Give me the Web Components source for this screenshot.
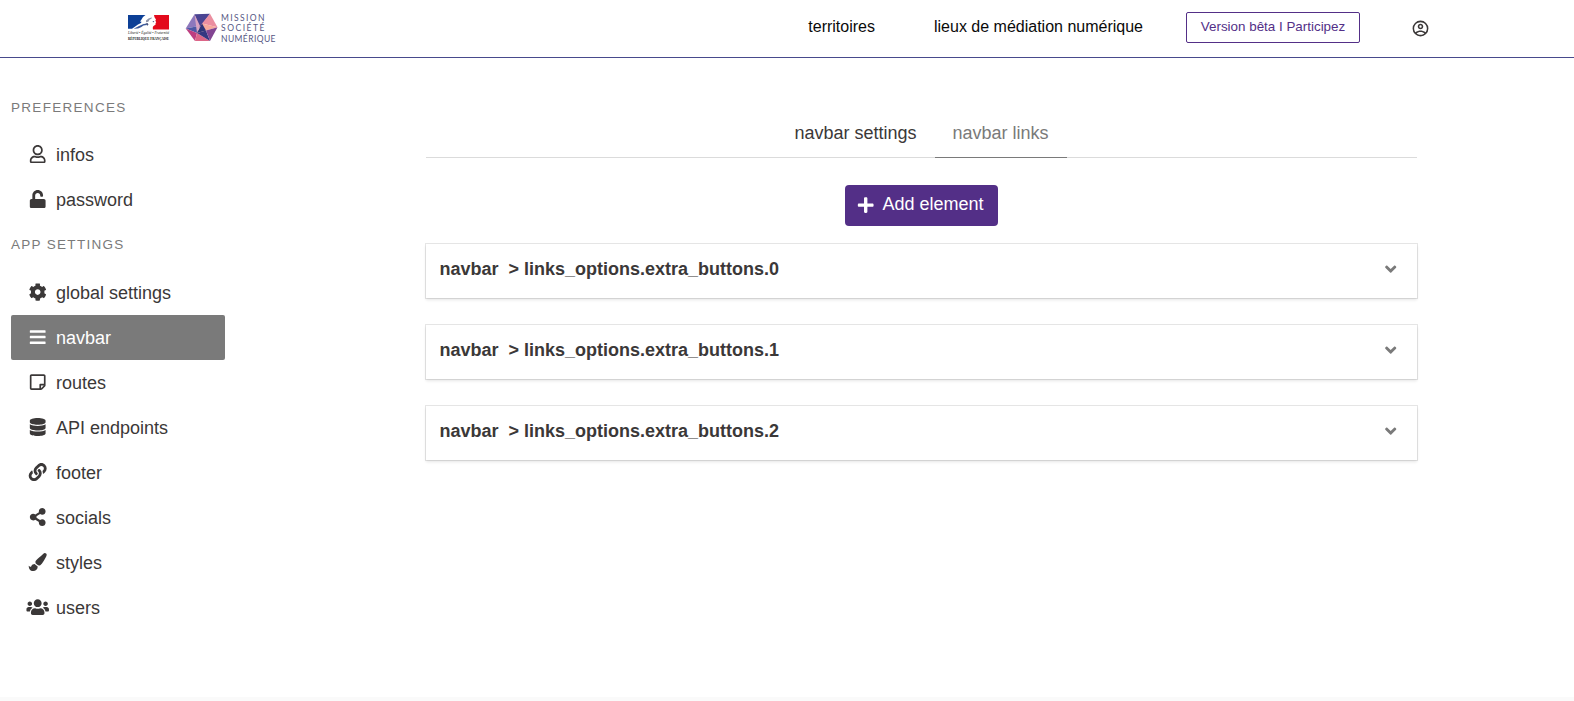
<!DOCTYPE html>
<html lang="fr">
<head>
<meta charset="utf-8">
<title>navbar links</title>
<style>
html,body{margin:0;height:100%}
body{background:#fff;color:#3b3838;font:18px/27px "Liberation Sans",Arial,sans-serif;overflow:hidden}
</style>
</head>
<body>
<app-shell></app-shell>
<script>
const P={
user:[448,"M313.6 304c-28.7 0-42.5 16-89.6 16-47.1 0-60.8-16-89.6-16C60.2 304 0 364.2 0 438.4V464c0 26.5 21.5 48 48 48h352c26.5 0 48-21.5 48-48v-25.6c0-74.2-60.2-134.4-134.4-134.4zM400 464H48v-25.6c0-47.6 38.8-86.4 86.4-86.4 14.6 0 38.3 16 89.6 16 51.7 0 74.9-16 89.6-16 47.6 0 86.4 38.8 86.4 86.4V464zM224 288c79.5 0 144-64.5 144-144S303.5 0 224 0 80 64.5 80 144s64.5 144 144 144zm0-240c52.9 0 96 43.1 96 96s-43.1 96-96 96-96-43.1-96-96 43.1-96 96-96z"],
unlock:[448,"M400 256H152V152.9c0-39.6 31.7-72.5 71.3-72.9 40-.4 72.7 32.1 72.7 72v16c0 13.3 10.7 24 24 24h32c13.3 0 24-10.7 24-24v-16C376 68 307.5-.3 223.5 0 139.5.3 72 69.5 72 153.5V256H48c-26.5 0-48 21.5-48 48v160c0 26.5 21.5 48 48 48h352c26.5 0 48-21.5 48-48V304c0-26.5-21.5-48-48-48z"],
cog:[512,"M487.4 315.7l-42.6-24.6c4.3-23.2 4.3-47 0-70.2l42.6-24.6c4.9-2.8 7.1-8.6 5.5-14-11.1-35.6-30-67.8-54.7-94.6-3.8-4.1-10-5.1-14.8-2.3L380.8 110c-17.9-15.4-38.5-27.3-60.8-35.1V25.8c0-5.6-3.9-10.5-9.4-11.7-36.7-8.2-74.3-7.8-109.2 0-5.5 1.2-9.4 6.1-9.4 11.7V75c-22.2 7.9-42.8 19.8-60.8 35.1L88.7 85.5c-4.9-2.8-11-1.9-14.8 2.3-24.7 26.7-43.6 58.9-54.7 94.6-1.7 5.4.6 11.2 5.5 14L67.3 221c-4.3 23.2-4.3 47 0 70.2l-42.6 24.6c-4.9 2.8-7.1 8.6-5.5 14 11.1 35.6 30 67.8 54.7 94.6 3.8 4.1 10 5.1 14.8 2.3l42.6-24.6c17.9 15.4 38.5 27.3 60.8 35.1v49.2c0 5.6 3.9 10.5 9.4 11.7 36.7 8.2 74.3 7.8 109.2 0 5.5-1.2 9.4-6.1 9.4-11.7v-49.2c22.2-7.9 42.8-19.8 60.8-35.1l42.6 24.6c4.9 2.8 11 1.9 14.8-2.3 24.7-26.7 43.6-58.9 54.7-94.6 1.5-5.5-.7-11.3-5.6-14.1zM256 336c-44.1 0-80-35.9-80-80s35.9-80 80-80 80 35.9 80 80-35.9 80-80 80z"],
bars:[448,"M16 60h416a16 16 0 0 1 16 16v40a16 16 0 0 1-16 16H16a16 16 0 0 1-16-16V76a16 16 0 0 1 16-16zm0 160h416a16 16 0 0 1 16 16v40a16 16 0 0 1-16 16H16a16 16 0 0 1-16-16v-40a16 16 0 0 1 16-16zm0 160h416a16 16 0 0 1 16 16v40a16 16 0 0 1-16 16H16a16 16 0 0 1-16-16v-40a16 16 0 0 1 16-16z"],
note:[448,"M448 348.106V80c0-26.51-21.49-48-48-48H48C21.49 32 0 53.49 0 80v351.988c0 26.51 21.49 48 48 48h268.118a48 48 0 0 0 33.941-14.059l83.882-83.882A48 48 0 0 0 448 348.106zm-128 80.014v-76.118h76.118L320 428.12zM400 80v223.988H296c-13.255 0-24 10.745-24 24v104H48V80h352z"],
database:[448,"M448 73.143v45.714C448 159.143 347.667 192 224 192S0 159.143 0 118.857V73.143C0 32.857 100.333 0 224 0s224 32.857 224 73.143zM448 176v102.857C448 319.143 347.667 352 224 352S0 319.143 0 278.857V176c48.125 33.143 136.208 48.572 224 48.572S399.874 209.143 448 176zm0 160v102.857C448 479.143 347.667 512 224 512S0 479.143 0 438.857V336c48.125 33.143 136.208 48.572 224 48.572S399.874 369.143 448 336z"],
link:[512,"M326.612 185.391c59.747 59.809 58.927 155.698.36 214.59-.11.12-.24.25-.36.37l-67.2 67.2c-59.27 59.27-155.699 59.262-214.96 0-59.27-59.26-59.27-155.7 0-214.96l37.106-37.106c9.84-9.84 26.786-3.3 27.294 10.606.648 17.722 3.826 35.527 9.69 52.721 1.986 5.822.567 12.262-3.783 16.612l-13.087 13.087c-28.026 28.026-28.905 73.66-1.155 101.96 28.024 28.579 74.086 28.749 102.325.51l67.2-67.19c28.191-28.191 28.073-73.757 0-101.83-3.701-3.694-7.429-6.564-10.341-8.569a16.037 16.037 0 0 1-6.947-12.606c-.396-10.567 3.348-21.456 11.698-29.806l21.054-21.055c5.521-5.521 14.182-6.199 20.584-1.731a152.482 152.482 0 0 1 20.522 17.197zM467.547 44.449c-59.261-59.262-155.69-59.27-214.96 0l-67.2 67.2c-.12.12-.25.25-.36.37-58.566 58.892-59.387 154.781.36 214.59a152.454 152.454 0 0 0 20.521 17.196c6.402 4.468 15.064 3.789 20.584-1.731l21.054-21.055c8.35-8.35 12.094-19.239 11.698-29.806a16.037 16.037 0 0 0-6.947-12.606c-2.912-2.005-6.64-4.875-10.341-8.569-28.073-28.073-28.191-73.639 0-101.83l67.2-67.19c28.239-28.239 74.3-28.069 102.325.51 27.75 28.3 26.872 73.934-1.155 101.96l-13.087 13.087c-4.35 4.35-5.769 10.79-3.783 16.612 5.864 17.194 9.042 34.999 9.69 52.721.509 13.906 17.454 20.446 27.294 10.606l37.106-37.106c59.271-59.259 59.271-155.699.001-214.959z"],
share:[448,"M352 320c-22.608 0-43.387 7.819-59.79 20.895l-102.486-64.054a96.551 96.551 0 0 0 0-41.683l102.486-64.054C308.613 184.181 329.392 192 352 192c53.019 0 96-42.981 96-96S405.019 0 352 0s-96 42.981-96 96c0 7.158.79 14.13 2.276 20.841L155.79 180.895C139.387 167.819 118.608 160 96 160c-53.019 0-96 42.981-96 96s42.981 96 96 96c22.608 0 43.387-7.819 59.79-20.895l102.486 64.054A96.301 96.301 0 0 0 256 416c0 53.019 42.981 96 96 96s96-42.981 96-96-42.981-96-96-96z"],
brush:[512,"M167.02 309.34c-40.12 2.58-76.53 17.86-97.19 72.3-2.35 6.21-8 9.98-14.59 9.98-11.11 0-45.46-27.67-55.25-34.35C0 439.62 37.93 512 128 512c75.86 0 128-43.77 128-120.19 0-3.11-.65-6.08-.97-9.13l-88.01-73.34zM457.89 0c-15.16 0-29.37 6.71-40.21 16.45C213.27 199.05 192 203.34 192 257.09c0 13.7 3.25 26.76 8.73 38.7l63.82 53.18c7.21 1.8 14.64 3.03 22.39 3.03 62.11 0 98.11-45.47 211.16-256.46 7.38-14.35 13.9-29.85 13.9-45.99C512 20.64 486 0 457.89 0z"],
users:[640,"M96 224c35.3 0 64-28.7 64-64s-28.7-64-64-64-64 28.7-64 64 28.7 64 64 64zm448 0c35.3 0 64-28.7 64-64s-28.7-64-64-64-64 28.7-64 64 28.7 64 64 64zm32 32h-64c-17.6 0-33.5 7.1-45.1 18.6 40.3 22.1 68.9 62 75.1 109.4h66c17.7 0 32-14.3 32-32v-32c0-35.3-28.7-64-64-64zm-256 0c61.9 0 112-50.1 112-112S381.9 32 320 32 208 82.1 208 144s50.1 112 112 112zm76.8 32h-8.3c-20.8 10-43.9 16-68.5 16s-47.6-6-68.5-16h-8.3C179.6 288 128 339.6 128 403.2V432c0 26.5 21.5 48 48 48h288c26.5 0 48-21.5 48-48v-28.8c0-63.6-51.6-115.2-115.2-115.2zm-223.7-13.4C161.5 263.1 145.6 256 128 256H64c-35.3 0-64 28.7-64 64v32c0 17.7 14.3 32 32 32h65.9c6.3-47.4 34.9-87.3 75.2-109.4z"],
plus:[448,"M416 208H272V64c0-17.67-14.33-32-32-32h-32c-17.67 0-32 14.33-32 32v144H32c-17.67 0-32 14.33-32 32v32c0 17.67 14.33 32 32 32h144v144c0 17.67 14.33 32 32 32h32c17.67 0 32-14.33 32-32V304h144c17.67 0 32-14.33 32-32v-32c0-17.67-14.33-32-32-32z"],
angle:[320,"M143 352.3L7 216.3c-9.4-9.4-9.4-24.6 0-33.9l22.6-22.6c9.4-9.4 24.6-9.4 33.9 0l96.4 96.4 96.4-96.4c9.4-9.4 24.6-9.4 33.9 0l22.6 22.6c9.4 9.4 9.4 24.6 0 33.9l-136 136c-9.2 9.4-24.4 9.4-33.8 0z"]
};
function define(name,render){
  customElements.define(name,class extends HTMLElement{
    connectedCallback(){
      if(this.shadowRoot)return;
      this.attachShadow({mode:"open"}).innerHTML=render(this);
    }
  });
}
define("app-icon",el=>{
  const [w,d]=P[el.getAttribute("name")];
  return `<style>:host{display:block;flex:none;width:27px;height:27px}svg{display:block;width:27px;height:27px;fill:currentColor}</style><svg viewBox="0 0 27 27"><path transform="translate(${13.7-w*9/512} 4.1) scale(${18/512})" d="${d}"/></svg>`;
});
define("republique-logo",()=>`<style>:host{display:block;width:42px;height:28px}svg{display:block;overflow:visible}</style>
<svg width="42" height="28" viewBox="0 0 42 28">
<path fill="#0c3f96" d="M0 0h17.500l-2.500 2-1.800 3-1.200 1.500 1.500.2-.5 1.300-3 1.500L4 13.800H0z"/>
<path fill="#e30a1c" d="M26 0h15v14.500H25c-.6-2 0-3.500 1.600-4.200l1.100-.9-.2-1.300.7-.6-.8-1.900.6-1.100-1.500-2.200z"/>
<path fill="#3c5a9c" d="M5.500 13.800 11 11l4.500-2 2.500-.3 1 1.200-3.500.6-2.500 1.800-3 1.200z"/>
<path fill="#8d93a8" d="m18 5.500 2.500-2 3-1 .6.600-2.600 1.600-1.200 2-2.300.6z"/>
<path fill="#44517c" d="m17.500 8.500 2-.5 1 1.500-1.200 1.200zM24.500 6.500l1.500-.4.200.8-1.200.3z"/>
<text x="0" y="19" textLength="41" lengthAdjust="spacingAndGlyphs" font-family="Liberation Serif,serif" font-style="italic" font-size="4.200" fill="#222">Liberté • Égalité • Fraternité</text>
<text x="0" y="24.500" textLength="41" lengthAdjust="spacingAndGlyphs" font-family="Liberation Serif,serif" font-weight="bold" font-size="4.800" fill="#111">RÉPUBLIQUE FRANÇAISE</text>
</svg>`);
define("mission-logo",()=>`<style>:host{display:block;width:92px;height:34px}svg{display:block;overflow:visible}</style>
<svg width="92" height="34" viewBox="0 0 92 34">
<path fill="#8d78bd" d="M-.3 15.500 8.500 1.300 13 13z"/>
<path fill="#4d58a5" d="M-.3 15.500 13 13 11 20z"/>
<path fill="#4a4492" d="M8.500 1.300 24 .7 13.500 15z"/>
<path fill="#d9a3c2" d="M8.500 1.300 14 13 11 20z"/>
<path fill="#eb8fa0" d="M24 .7 31.500 14.300 16 10.500z"/>
<path fill="#f6a99c" d="M16 10.500 31.500 14.300 11 20z"/>
<path fill="#2d3478" d="M16 10.500 20 17.500 11 20z"/>
<path fill="#bd3f80" d="M-.3 15.500 11 20 9 28z"/>
<path fill="#dc6688" d="M11 20 9 28 24 28z"/>
<path fill="#343781" d="M11 20 20 17.500 24 28z"/>
<path fill="#824592" d="M20 17.500 31.500 14.300 24 28z"/>
<g font-family="Lato,sans-serif" font-size="8.500" fill="#555784"><text x="35" y="7.500" textLength="43.500">MISSION</text><text x="35" y="18" textLength="43.500">SOCIÉTÉ</text><text x="35" y="28.500" textLength="54.500">NUMÉRIQUE</text></g>
</svg>`);
define("top-bar",()=>`<style>
:host{display:flex;height:57px;border-bottom:1px solid #484a8c;box-sizing:content-box;color:#0a0a0a;font-size:16px;line-height:24px;align-items:flex-start}
republique-logo{margin:15px 0 0 128px}mission-logo{margin:13px 0 0 16px}
nav{display:flex;margin-left:auto;align-items:flex-start}
a{white-space:nowrap;margin-top:15px}
.l{margin-left:59px}
.b{box-sizing:border-box;height:31px;width:174px;margin:12px 0 0 43px;border:1px solid #532f87;border-radius:2px;text-align:center;color:#532f87;font-size:13.400px;line-height:28px}
svg{margin:19px 144px 0 51px;width:19px;height:19px;fill:#3b3838}
</style><republique-logo></republique-logo><mission-logo></mission-logo>
<nav><a>territoires</a><a class="l">lieux de médiation numérique</a><a class="b">Version bêta I Participez</a>
<svg viewBox="0 0 24 24"><path d="M12,2A10,10 0 0,0 2,12A10,10 0 0,0 12,22A10,10 0 0,0 22,12A10,10 0 0,0 12,2M7.07,18.28C7.5,17.38 10.12,16.5 12,16.5C13.88,16.5 16.5,17.38 16.93,18.28C15.57,19.36 13.86,20 12,20C10.14,20 8.43,19.36 7.07,18.28M18.36,16.83C16.93,15.09 13.46,14.5 12,14.5C10.54,14.5 7.07,15.09 5.64,16.83C4.62,15.5 4,13.82 4,12C4,7.59 7.59,4 12,4C16.41,4 20,7.59 20,12C20,13.82 19.38,15.5 18.36,16.83M12,6C10.06,6 8.5,7.56 8.5,9.5C8.5,11.44 10.06,13 12,13C13.94,13 15.5,11.44 15.5,9.5C15.5,7.56 13.94,6 12,6M12,11A1.5,1.5 0 0,1 10.5,9.5A1.5,1.5 0 0,1 12,8A1.5,1.5 0 0,1 13.5,9.5A1.5,1.5 0 0,1 12,11Z"/></svg></nav>`);
define("menu-label",()=>`<style>:host{display:block;height:20px;font-size:13.500px;line-height:20px;letter-spacing:1.300px;color:#7a7a7a}</style><slot></slot>`);
define("menu-item",el=>`<style>:host{display:flex;box-sizing:border-box;height:45px;padding:9px 12.500px;border-radius:2px;gap:5.500px}:host([active]){background:#7a7a7a;color:#fff}span{line-height:28px}</style><app-icon name="${el.getAttribute("icon")}"></app-icon><span><slot></slot></span>`);
define("side-menu",()=>`<style>:host{display:block;width:214px;padding:40px 0 0 11px}.g{padding:14px 0 13px}.g+menu-label+.g{padding-top:15px}</style>
<menu-label>PREFERENCES</menu-label><div class="g"><menu-item icon="user">infos</menu-item><menu-item icon="unlock">password</menu-item></div>
<menu-label>APP SETTINGS</menu-label><div class="g"><menu-item icon="cog">global settings</menu-item><menu-item icon="bars" active>navbar</menu-item><menu-item icon="note">routes</menu-item><menu-item icon="database">API endpoints</menu-item><menu-item icon="link">footer</menu-item><menu-item icon="share">socials</menu-item><menu-item icon="brush">styles</menu-item><menu-item icon="users">users</menu-item></div>`);
define("tab-item",()=>`<style>:host{display:block;padding:8px 18px 10px;height:27px;line-height:27px;border-bottom:1px solid #dbdbdb;margin-bottom:-1px}:host([active]){color:#7a7a7a;border-color:#7a7a7a}</style><slot></slot>`);
define("tab-bar",()=>`<style>:host{display:flex;justify-content:center;border-bottom:1px solid #dbdbdb;margin-left:1px}</style><slot></slot>`);
define("add-button",()=>`<style>:host{display:flex;box-sizing:border-box;width:153px;height:41px;margin:27px auto 18px;padding:7px 0 7px 7px;border-radius:4px;background:#532f87;color:#fff;gap:4px}span{line-height:25px}</style><app-icon name="plus"></app-icon><span><slot></slot></span>`);
define("link-card",()=>`<style>:host{display:flex;box-sizing:border-box;height:54px;margin:0 0 27px 1px;padding:12px 13.500px;justify-content:space-between;font-weight:bold;box-shadow:0 2px 3px rgba(10,10,10,.1),0 0 0 1px rgba(10,10,10,.1)}span{white-space:pre;line-height:27px}app-icon{color:#7a7a7a}</style><span>navbar  &gt; <slot></slot></span><app-icon name="angle"></app-icon>`);
define("app-shell",()=>`<style>:host{display:flex;flex-direction:column;height:701px}main{display:flex;flex:1}section{width:992px;margin-left:200px;padding-top:54px}footer{height:4px;background:#fafafa}</style>
<top-bar></top-bar><main><side-menu></side-menu><section><tab-bar><tab-item>navbar settings</tab-item><tab-item active>navbar links</tab-item></tab-bar><add-button>Add element</add-button><link-card>links_options.extra_buttons.0</link-card><link-card>links_options.extra_buttons.1</link-card><link-card>links_options.extra_buttons.2</link-card></section></main><footer></footer>`);
</script>
</body>
</html>
